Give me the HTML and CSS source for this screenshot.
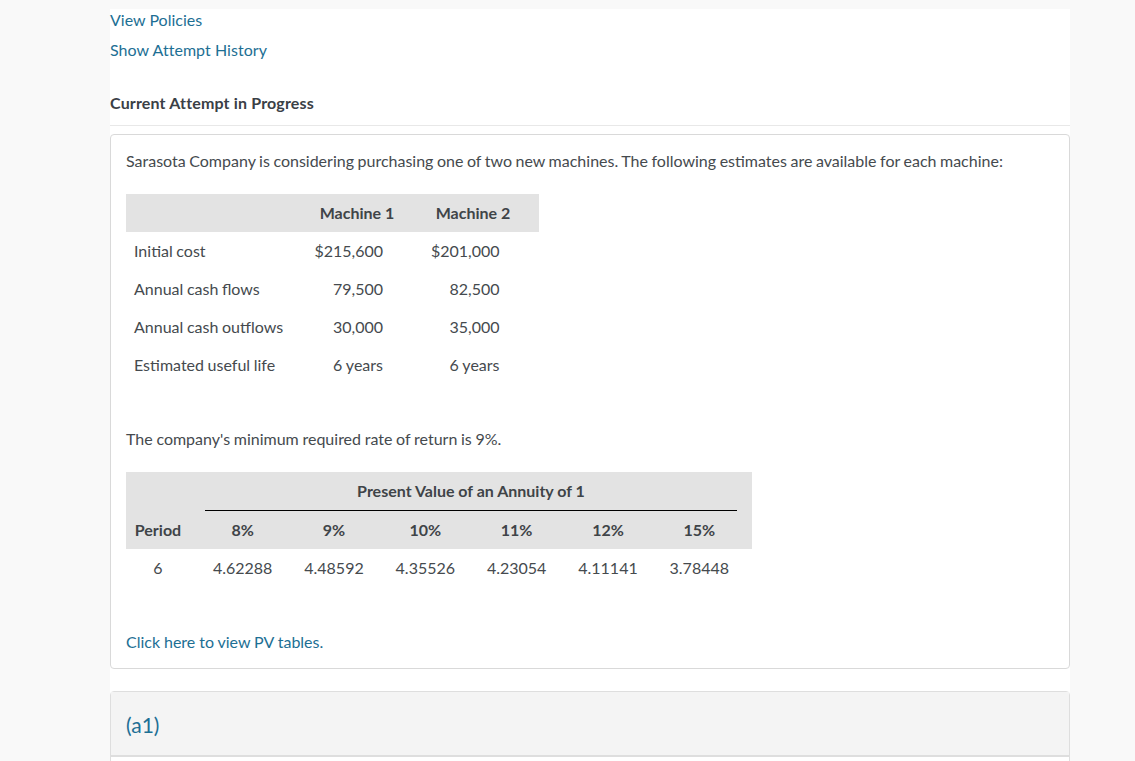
FILE: index.html
```html
<!DOCTYPE html>
<html lang="en">
<head>
<meta charset="utf-8">
<title>Current Attempt in Progress</title>
<link rel="stylesheet" href="styles.css">
</head>
<body>
<main class="panel">
  <p class="link-row"><a href="#">View Policies</a></p>
  <p class="link-row"><a class="history" href="#">Show Attempt History</a></p>
  <h2 class="attempt">Current Attempt in Progress</h2>
  <section class="card">
    <p class="intro">Sarasota Company is considering purchasing one of two new machines. The following estimates are available for each machine:</p>
    <table class="estimates">
      <colgroup><col class="e1"><col class="e2"><col class="e3"></colgroup>
      <thead>
        <tr><th></th><th>Machine 1</th><th class="m2">Machine 2</th></tr>
      </thead>
      <tbody>
        <tr><td class="label">Initial cost</td><td class="v1">$215,600</td><td class="v2">$201,000</td></tr>
        <tr><td class="label">Annual cash flows</td><td class="v1">79,500</td><td class="v2">82,500</td></tr>
        <tr><td class="label">Annual cash outflows</td><td class="v1">30,000</td><td class="v2">35,000</td></tr>
        <tr><td class="label">Estimated useful life</td><td class="v1">6 years</td><td class="v2">6 years</td></tr>
      </tbody>
    </table>
    <p class="rate">The company's minimum required rate of return is 9%.</p>
    <table class="annuity">
      <colgroup><col class="a1"><col class="a2"><col class="a3"><col class="a3"><col class="a3"><col class="a3"><col class="a3"><col class="a3"><col class="a4"></colgroup>
      <thead>
        <tr class="title-row"><th></th><th></th><th colspan="6"><div class="ruled">Present Value of an Annuity of 1</div></th><th></th></tr>
        <tr><th>Period</th><th></th><th>8%</th><th>9%</th><th>10%</th><th>11%</th><th>12%</th><th>15%</th><th></th></tr>
      </thead>
      <tbody>
        <tr><td>6</td><td></td><td>4.62288</td><td>4.48592</td><td>4.35526</td><td>4.23054</td><td>4.11141</td><td>3.78448</td><td></td></tr>
      </tbody>
    </table>
    <p class="pv-link"><a href="#">Click here to view PV tables.</a></p>
  </section>
  <section class="part">
    <h3 class="part-head">(a1)</h3>
  </section>
</main>
</body>
</html>
```
FILE: styles.css
```css
html, body { margin: 0; padding: 0; height: 761px; overflow: hidden; }
body {
  background: #f9f9f9;
  font-family: Lato, "Liberation Sans", sans-serif;
  font-size: 16px;
  color: #454a4e;
  padding-top: 9px;
  box-sizing: border-box;
}
a { color: #1d6f94; text-decoration: none; }
.panel {
  width: 960px;
  margin-left: 110px;
  background: #fff;
  height: 752px;
}
.link-row { margin: 0; height: 30px; line-height: 22px; }
.history { letter-spacing: 0.05px; }
.attempt {
  margin: 0 0 8px;
  height: 33px;
  padding-top: 23px;
  font-size: 16px;
  font-weight: 700;
  line-height: 22px;
  letter-spacing: 0.16px;
  color: #3a4046;
  border-bottom: 1px solid #e8e8e8;
}
.card {
  height: 535px;
  box-sizing: border-box;
  border: 1px solid #d9d9d9;
  border-radius: 4px;
  padding: 15px 15px 0;
}
.intro, .rate { margin: 0; line-height: 22px; }
.intro { word-spacing: -0.55px; }
table { border-collapse: collapse; table-layout: fixed; }
th { font-weight: 700; color: #3f4448; }
th, td { padding: 0 0 2px; height: 38px; box-sizing: border-box; }
.estimates { width: 413px; margin-top: 22px; }
.e1 { width: 180px; }
.e2 { width: 102px; }
.e3 { width: 131px; }
.estimates thead tr, .annuity thead tr { background: #e3e3e3; }
.estimates th { text-align: center; }
.estimates th.m2 { padding-right: 1px; }
td.label { padding-left: 8px; word-spacing: -0.5px; }
td.v1 { text-align: right; padding-right: 25px; }
td.v2 { text-align: right; padding-right: 39.5px; }
.rate { margin-top: 44px; word-spacing: -0.4px; }
.annuity { width: 626px; margin-top: 22px; text-align: center; }
.a1 { width: 64px; }
.a2 { width: 7px; }
.a3 { width: 91.33px; }
.a4 { width: 7px; }
.annuity th, .annuity td { text-align: center; }
.annuity .title-row th { height: 39px; padding: 0; vertical-align: top; }
.ruled {
  margin: 0 8px;
  height: 39px;
  box-sizing: border-box;
  line-height: 38px;
  border-bottom: 1px solid #000;
}
.pv-link { margin: 44px 0 0; line-height: 22px; word-spacing: -0.2px; }
.part {
  margin-top: 22px;
  height: 80px;
  box-sizing: border-box;
  border: 1px solid #dedede;
  border-radius: 4px 4px 0 0;
}
.part-head {
  margin: 0;
  height: 65px;
  box-sizing: border-box;
  padding-left: 15px;
  background: #f4f4f4;
  border-bottom: 2px solid #dedede;
  font-size: 21px;
  font-weight: 400;
  line-height: 65px;
  color: #1d6f94;
}
```
